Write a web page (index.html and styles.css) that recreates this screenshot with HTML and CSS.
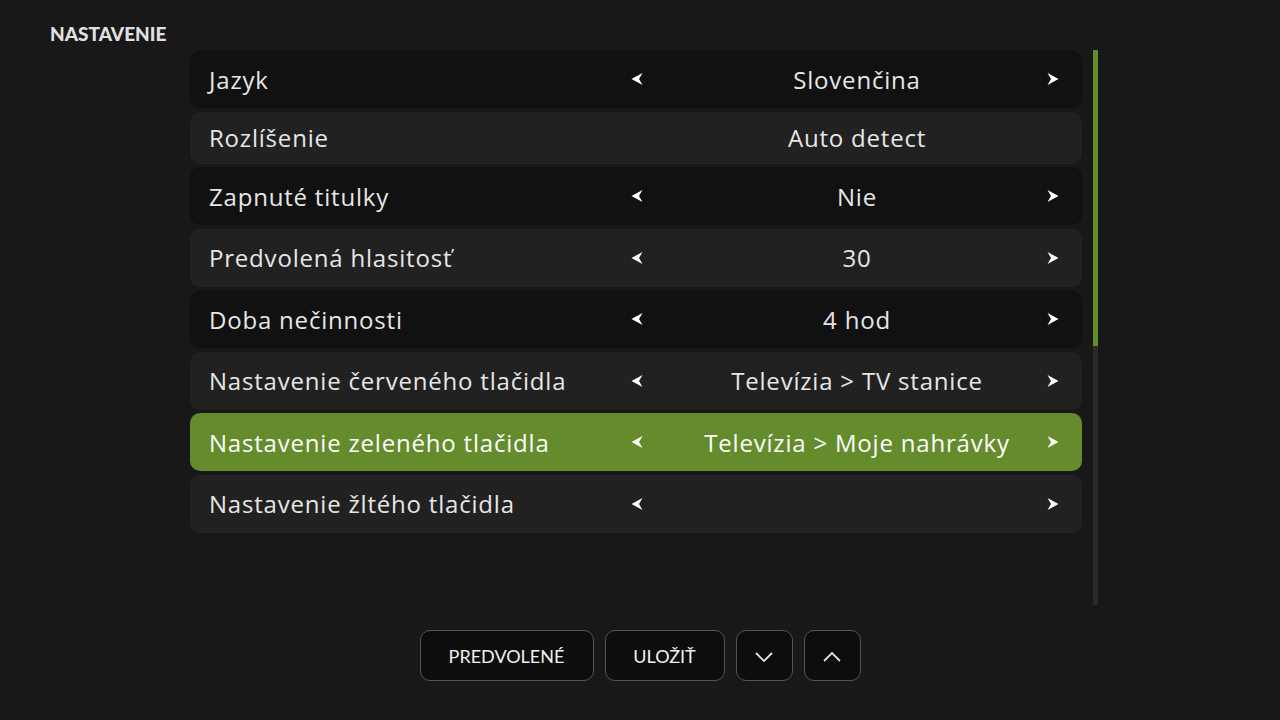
FILE: index.html
```html
<!DOCTYPE html>
<html>
<head>
    <title>Nastavenie</title>
    <link rel="stylesheet" href="styles.css">
</head>
<body>
    <h1 class="title">NASTAVENIE</h1>

    <div class="panel">
        <div class="list">
            <div class="row dark">
                <span class="label">Jazyk</span>
                <span class="arrow"><svg viewBox="0 0 12 14"><polygon points="11.5,1 0.5,7 11.5,13 8,7"/></svg></span>
                <span class="value">Slovenčina</span>
                <span class="arrow"><svg viewBox="0 0 12 14"><polygon points="0.5,1 11.5,7 0.5,13 4,7"/></svg></span>
            </div>
            <div class="row light short">
                <span class="label">Rozlíšenie</span>
                <span class="arrow"></span>
                <span class="value">Auto detect</span>
                <span class="arrow"></span>
            </div>
            <div class="row dark">
                <span class="label">Zapnuté titulky</span>
                <span class="arrow"><svg viewBox="0 0 12 14"><polygon points="11.5,1 0.5,7 11.5,13 8,7"/></svg></span>
                <span class="value">Nie</span>
                <span class="arrow"><svg viewBox="0 0 12 14"><polygon points="0.5,1 11.5,7 0.5,13 4,7"/></svg></span>
            </div>
            <div class="row light">
                <span class="label">Predvolená hlasitosť</span>
                <span class="arrow"><svg viewBox="0 0 12 14"><polygon points="11.5,1 0.5,7 11.5,13 8,7"/></svg></span>
                <span class="value">30</span>
                <span class="arrow"><svg viewBox="0 0 12 14"><polygon points="0.5,1 11.5,7 0.5,13 4,7"/></svg></span>
            </div>
            <div class="row dark">
                <span class="label">Doba nečinnosti</span>
                <span class="arrow"><svg viewBox="0 0 12 14"><polygon points="11.5,1 0.5,7 11.5,13 8,7"/></svg></span>
                <span class="value">4 hod</span>
                <span class="arrow"><svg viewBox="0 0 12 14"><polygon points="0.5,1 11.5,7 0.5,13 4,7"/></svg></span>
            </div>
            <div class="row light">
                <span class="label">Nastavenie červeného tlačidla</span>
                <span class="arrow"><svg viewBox="0 0 12 14"><polygon points="11.5,1 0.5,7 11.5,13 8,7"/></svg></span>
                <span class="value">Televízia &gt; TV stanice</span>
                <span class="arrow"><svg viewBox="0 0 12 14"><polygon points="0.5,1 11.5,7 0.5,13 4,7"/></svg></span>
            </div>
            <div class="row active">
                <span class="label">Nastavenie zeleného tlačidla</span>
                <span class="arrow"><svg viewBox="0 0 12 14"><polygon points="11.5,1 0.5,7 11.5,13 8,7"/></svg></span>
                <span class="value">Televízia &gt; Moje nahrávky</span>
                <span class="arrow"><svg viewBox="0 0 12 14"><polygon points="0.5,1 11.5,7 0.5,13 4,7"/></svg></span>
            </div>
            <div class="row light">
                <span class="label">Nastavenie žltého tlačidla</span>
                <span class="arrow"><svg viewBox="0 0 12 14"><polygon points="11.5,1 0.5,7 11.5,13 8,7"/></svg></span>
                <span class="value"></span>
                <span class="arrow"><svg viewBox="0 0 12 14"><polygon points="0.5,1 11.5,7 0.5,13 4,7"/></svg></span>
            </div>
        </div>
        <div class="scrollbar"><div class="thumb"></div></div>
    </div>

    <div class="buttons">
        <button class="btn wide">PREDVOLENÉ</button>
        <button class="btn mid">ULOŽIŤ</button>
        <button class="btn icon"><svg viewBox="0 0 20 12"><polyline points="2,2 10,10 18,2"/></svg></button>
        <button class="btn icon"><svg viewBox="0 0 20 12"><polyline points="2,10 10,2 18,10"/></svg></button>
    </div>
</body>
</html>
```

FILE: styles.css
```css
body { margin: 0; background: #181818; color: #e6e6e6; font-family: "Lato", "Noto Sans", sans-serif; width: 1280px; height: 720px; overflow: hidden; }
.title { margin: 0; padding: 22px 0 0 50px; height: 28px; font-size: 19px; font-weight: 900; letter-spacing: 0px; color: #e0e0e0; line-height: 24px; }

.panel { display: flex; gap: 11px; padding-left: 190px; }
.list { width: 892px; }
.row { display: grid; grid-template-columns: 398px 60px 380px 12px; align-items: center; height: 58px; padding: 0 23px 0 19px; margin-bottom: 3.5px; border-radius: 10px; font-family: "Open Sans", sans-serif; font-size: 24px; letter-spacing: 0.8px; }
.row.short { height: 52px; }
.dark { background: #111111; }
.light { background: #212121; }
.active { background: #648c2c; color: #ffffff; }
.label { white-space: nowrap; }
.value { text-align: center; white-space: nowrap; }
.arrow { display: flex; justify-content: center; }
.arrow svg { width: 12px; height: 14px; fill: #ffffff; }

.scrollbar { width: 5px; height: 555px; background: #2a2a2a; }
.thumb { height: 296px; background: #648c2c; }

.buttons { display: flex; justify-content: center; gap: 11px; margin-top: 25px; }
.btn { height: 51px; background: #0d0d0d; border: 1px solid #555; border-radius: 10px; color: #f0f0f0; font-family: "Lato", sans-serif; font-size: 18px; padding: 0; cursor: pointer; }
.btn.wide { width: 174px; }
.btn.mid { width: 120px; }
.btn.icon { width: 57px; }
.btn.icon svg { width: 20px; height: 12px; fill: none; stroke: #e0e0e0; stroke-width: 1.8; }
```
